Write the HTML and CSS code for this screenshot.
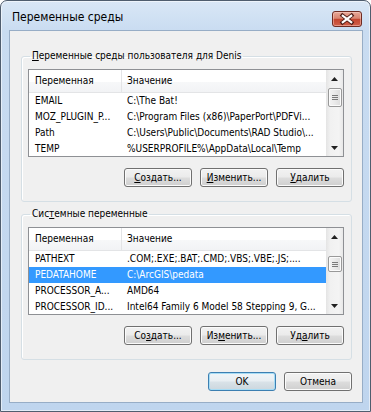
FILE: index.html
```html
<!DOCTYPE html>
<html lang="ru">
<head>
<meta charset="utf-8">
<title>Переменные среды</title>
<link rel="stylesheet" href="styles.css">
</head>
<body>
<div class="window">
  <div class="titlebar">
    <span class="title">Переменные среды</span>
    <div class="close">
      <svg width="28" height="14" viewBox="0 0 28 14">
        <path d="M9.5 3.5 L18.5 10.5 M18.5 3.5 L9.5 10.5" stroke="#4a1a14" stroke-width="4" stroke-linecap="square"/>
        <path d="M9.8 3.8 L18.2 10.2 M18.2 3.8 L9.8 10.2" stroke="#fff" stroke-width="2.2" stroke-linecap="square"/>
      </svg>
    </div>
  </div>
  <div class="client">
    <fieldset class="group">
      <legend><u>П</u>еременные среды пользователя для Denis</legend>
      <div class="list">
        <div class="list-main">
          <div class="hdr"><div class="c1">Переменная</div><div class="c2">Значение</div></div>
          <div class="row"><div class="c1">EMAIL</div><div class="c2">C:\The Bat!</div></div>
          <div class="row"><div class="c1">MOZ_PLUGIN_P...</div><div class="c2">C:\Program Files (x86)\PaperPort\PDFVi...</div></div>
          <div class="row"><div class="c1">Path</div><div class="c2">C:\Users\Public\Documents\RAD Studio\...</div></div>
          <div class="row"><div class="c1">TEMP</div><div class="c2">%USERPROFILE%\AppData\Local\Temp</div></div>
        </div>
        <div class="vscroll">
          <div class="arrow"><svg width="7" height="4" viewBox="0 0 7 4"><path d="M0 4 L3.5 0 L7 4 Z" fill="#222"/></svg></div>
          <div class="track">
            <div class="thumb" style="margin-top:1px;height:19px"><span></span><span></span><span></span></div>
          </div>
          <div class="arrow"><svg width="7" height="4" viewBox="0 0 7 4"><path d="M0 0 L3.5 4 L7 0 Z" fill="#222"/></svg></div>
        </div>
      </div>
      <div class="btns">
        <button class="btn"><u>С</u>оздать...</button>
        <button class="btn"><u>И</u>зменить...</button>
        <button class="btn"><u>У</u>далить</button>
      </div>
    </fieldset>

    <fieldset class="group group2">
      <legend>Сис<u>т</u>емные переменные</legend>
      <div class="list">
        <div class="list-main">
          <div class="hdr"><div class="c1">Переменная</div><div class="c2">Значение</div></div>
          <div class="row"><div class="c1">PATHEXT</div><div class="c2">.COM;.EXE;.BAT;.CMD;.VBS;.VBE;.JS;....</div></div>
          <div class="row sel"><div class="c1">PEDATAHOME</div><div class="c2">C:\ArcGIS\pedata</div></div>
          <div class="row"><div class="c1">PROCESSOR_A...</div><div class="c2">AMD64</div></div>
          <div class="row"><div class="c1">PROCESSOR_ID...</div><div class="c2">Intel64 Family 6 Model 58 Stepping 9, G...</div></div>
        </div>
        <div class="vscroll">
          <div class="arrow"><svg width="7" height="4" viewBox="0 0 7 4"><path d="M0 4 L3.5 0 L7 4 Z" fill="#222"/></svg></div>
          <div class="track">
            <div class="thumb" style="margin-top:11px;height:16px"><span></span><span></span><span></span></div>
          </div>
          <div class="arrow"><svg width="7" height="4" viewBox="0 0 7 4"><path d="M0 0 L3.5 4 L7 0 Z" fill="#222"/></svg></div>
        </div>
      </div>
      <div class="btns">
        <button class="btn">Со<u>з</u>дать...</button>
        <button class="btn">Из<u>м</u>енить...</button>
        <button class="btn">Уд<u>а</u>лить</button>
      </div>
    </fieldset>

    <div class="dlg-btns">
      <button class="btn default">OK</button>
      <button class="btn">Отмена</button>
    </div>
  </div>
</div>
</body>
</html>
```
FILE: styles.css
```css
* { box-sizing: border-box; }
html, body { margin: 0; padding: 0; }
body {
  width: 371px;
  height: 412px;
  overflow: hidden;
  background: #ffffff;
  font-family: "DejaVu Sans Condensed", "DejaVu Sans", sans-serif;
  font-stretch: condensed;
  font-size: 10px;
  color: #000;
}
u { text-decoration: underline; text-underline-offset: 1px; }

.window {
  width: 371px;
  height: 412px;
  border: 1px solid #4f5d6e;
  border-radius: 7px 7px 0 0;
  background: linear-gradient(#d9e7f6 0, #c9dcf1 30px, #bfd5ee 100%);
  box-shadow: inset 0 0 0 1px rgba(255,255,255,0.55);
  padding: 0 7px 8px 8px;
  display: flex;
  flex-direction: column;
}

.titlebar {
  height: 29px;
  display: flex;
  justify-content: space-between;
  align-items: flex-start;
}
.title {
  font-size: 12px;
  line-height: 14px;
  padding: 9px 0 0 3px;
  color: #000;
}
.close {
  margin: 10px 1px 0 0;
  width: 30px;
  height: 16px;
  border: 1px solid #6e2b22;
  border-radius: 3px;
  background: linear-gradient(#e7a898 0, #d98470 45%, #c4452f 52%, #d0604a 100%);
  box-shadow: inset 0 0 0 1px rgba(255,220,210,0.45);
  display: flex;
  align-items: center;
  justify-content: center;
}

.client {
  flex: 1;
  border: 1px solid #97adc6;
  background: #f0f0f0;
  display: flex;
  flex-direction: column;
}

.group {
  margin: 19px 10px 0 11px;
  padding: 7px 7px 14px 6px;
  border: 1px solid #d5dfe5;
  border-radius: 3px;
  min-width: 0;
  box-shadow: inset 1px 1px 0 #fff;
}
.group2 { margin-top: 6px; }
.group legend {
  padding: 0 2px;
  margin-left: 2px;
  line-height: 12px;
}

.list {
  width: 316px;
  height: 88px;
  border: 1px solid #8e9094;
  background: #fff;
  display: flex;
  overflow: hidden;
}
.list-main {
  flex: 1;
  min-width: 0;
  display: flex;
  flex-direction: column;
}
.hdr {
  height: 23px;
  flex: none;
  display: flex;
  line-height: 22px;
  background: linear-gradient(#ffffff 0, #ffffff 55%, #f7f8f9 55%, #f2f3f5 100%);
  border-bottom: 1px solid #e3e4e6;
}
.hdr .c1 { border-right: 1px solid #e3e4e6; }
.row {
  height: 16px;
  flex: none;
  display: flex;
  line-height: 16px;
}
.row.sel { background: #3399ff; color: #fff; }
.c1 {
  width: 93px;
  flex: none;
  padding-left: 6px;
  white-space: nowrap;
  overflow: hidden;
}
.c2 {
  flex: 1;
  padding-left: 5px;
  white-space: nowrap;
  overflow: hidden;
}

.vscroll {
  width: 17px;
  flex: none;
  display: flex;
  flex-direction: column;
  background: linear-gradient(90deg, #e4e4e4 0, #f1f1f1 25%, #f4f4f4 75%, #e8e8e8 100%);
}
.arrow {
  height: 17px;
  flex: none;
  display: flex;
  align-items: center;
  justify-content: center;
}
.track { flex: 1; display: flex; flex-direction: column; align-items: center; }
.thumb {
  width: 14px;
  border: 1px solid #999999;
  border-radius: 2px;
  background: linear-gradient(90deg, #f4f4f4 0, #e9e9e9 50%, #dcdcdc 100%);
  box-shadow: inset 0 0 0 1px #fbfbfb;
  display: flex;
  flex-direction: column;
  align-items: center;
  justify-content: center;
  gap: 1px;
}
.thumb span {
  width: 6px;
  height: 1px;
  background: #7a7a7a;
}

.btns {
  margin-top: 11px;
  display: flex;
  justify-content: flex-end;
  gap: 8px;
  width: 316px;
}
.btn {
  width: 68px;
  height: 19px;
  padding: 0;
  font: inherit;
  color: #000;
  border: 1px solid #707070;
  border-radius: 3px;
  background: linear-gradient(#f2f2f2 0, #ebebeb 48%, #dddddd 52%, #cfcfcf 100%);
  box-shadow: inset 0 0 0 1px #fbfbfb;
  line-height: 15px;
}
.btn.default {
  border-color: #3c7fb1;
  box-shadow: inset 0 0 0 1px #a6dcf5;
  background: linear-gradient(#f0f5f8 0, #e8eef2 48%, #d9e2e8 52%, #ccd7de 100%);
}

.dlg-btns {
  margin: 12px 10px 0 0;
  display: flex;
  justify-content: flex-end;
  gap: 8px;
}
```
